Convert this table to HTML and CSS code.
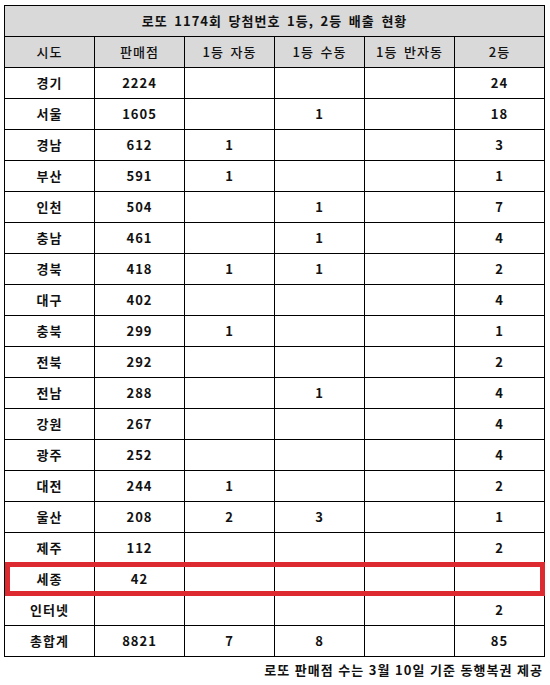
FILE: index.html
```html
<!DOCTYPE html>
<html lang="ko">
<head>
<meta charset="utf-8">
<link rel="stylesheet" href="styles.css">
</head>
<body>
<div class="wrap">
  <table class="lotto">
    <colgroup>
      <col class="c"><col class="c"><col class="c"><col class="c"><col class="c"><col class="c">
    </colgroup>
    <thead>
      <tr class="title"><th colspan="6">로또 1174회 당첨번호 1등, 2등 배출 현황</th></tr>
      <tr class="head"><th>시도</th><th>판매점</th><th>1등 자동</th><th>1등 수동</th><th>1등 반자동</th><th>2등</th></tr>
    </thead>
    <tbody>
      <tr><td>경기</td><td>2224</td><td></td><td></td><td></td><td>24</td></tr>
      <tr><td>서울</td><td>1605</td><td></td><td>1</td><td></td><td>18</td></tr>
      <tr><td>경남</td><td>612</td><td>1</td><td></td><td></td><td>3</td></tr>
      <tr><td>부산</td><td>591</td><td>1</td><td></td><td></td><td>1</td></tr>
      <tr><td>인천</td><td>504</td><td></td><td>1</td><td></td><td>7</td></tr>
      <tr><td>충남</td><td>461</td><td></td><td>1</td><td></td><td>4</td></tr>
      <tr><td>경북</td><td>418</td><td>1</td><td>1</td><td></td><td>2</td></tr>
      <tr><td>대구</td><td>402</td><td></td><td></td><td></td><td>4</td></tr>
      <tr><td>충북</td><td>299</td><td>1</td><td></td><td></td><td>1</td></tr>
      <tr><td>전북</td><td>292</td><td></td><td></td><td></td><td>2</td></tr>
      <tr><td>전남</td><td>288</td><td></td><td>1</td><td></td><td>4</td></tr>
      <tr><td>강원</td><td>267</td><td></td><td></td><td></td><td>4</td></tr>
      <tr><td>광주</td><td>252</td><td></td><td></td><td></td><td>4</td></tr>
      <tr><td>대전</td><td>244</td><td>1</td><td></td><td></td><td>2</td></tr>
      <tr><td>울산</td><td>208</td><td>2</td><td>3</td><td></td><td>1</td></tr>
      <tr><td>제주</td><td>112</td><td></td><td></td><td></td><td>2</td></tr>
      <tr><td>세종</td><td>42</td><td></td><td></td><td></td><td></td></tr>
      <tr><td>인터넷</td><td></td><td></td><td></td><td></td><td>2</td></tr>
      <tr><td>총합계</td><td>8821</td><td>7</td><td>8</td><td></td><td>85</td></tr>
    </tbody>
  </table>
  <div class="highlight"></div>
  <p class="note">로또 판매점 수는 3월 10일 기준 동행복권 제공</p>
</div>
</body>
</html>
```
FILE: styles.css
```css
html, body {
  margin: 0;
  padding: 0;
  background: #ffffff;
}
body {
  font-family: "Noto Sans CJK KR", "Noto Sans", sans-serif;
  color: #111;
  width: 550px;
  height: 685px;
  overflow: hidden;
}
.wrap {
  position: relative;
  padding: 5px 0 0 4px;
}
.lotto {
  border-collapse: collapse;
  table-layout: fixed;
  width: 541px;
}
.lotto .c {
  width: 90px;
}
.lotto th,
.lotto td {
  border: 1px solid #000;
  height: 30px;
  padding: 0;
  text-align: center;
  vertical-align: middle;
  font-size: 13px;
  font-weight: 700;
  line-height: 16px;
  letter-spacing: 1px;
  word-spacing: 2px;
}
.lotto .title th,
.lotto .head th {
  background: #d9d9d9;
}
.lotto .head th {
  font-weight: 500;
}
.highlight {
  position: absolute;
  left: 5px;
  top: 562px;
  width: 540px;
  height: 34px;
  box-sizing: border-box;
  border: 5px solid #dc2a30;
}
.note {
  margin: 4px 0 0 0;
  padding-right: 7px;
  text-align: right;
  font-size: 13px;
  font-weight: 700;
  line-height: 18px;
  letter-spacing: 1px;
  word-spacing: 0;
}
```
